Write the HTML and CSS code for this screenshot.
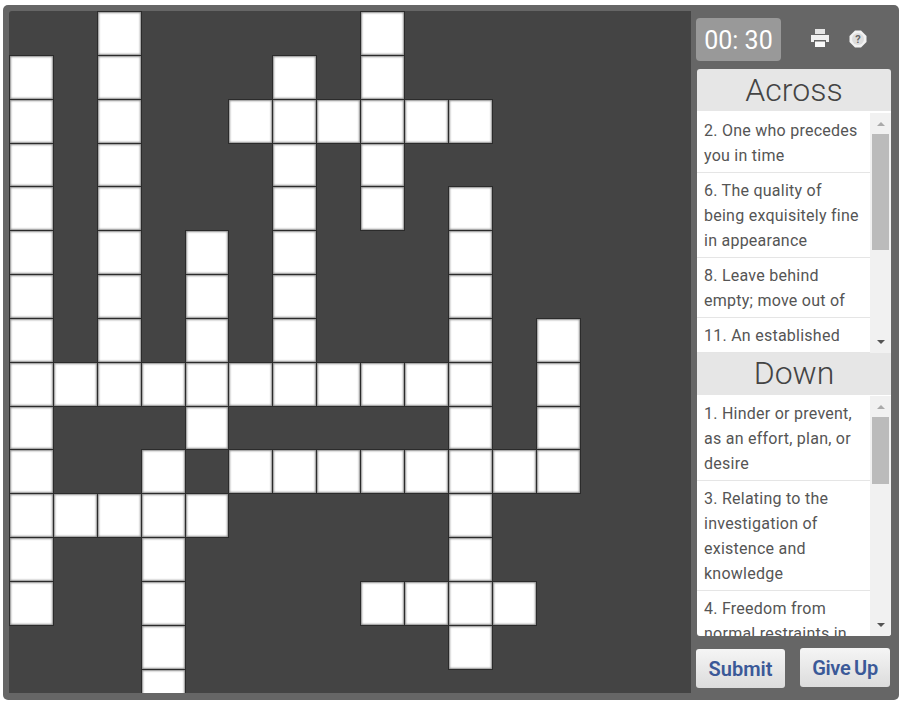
FILE: index.html
```html
<!DOCTYPE html>
<html lang="en">
<head>
  <meta charset="UTF-8">
  <meta name="viewport" content="width=device-width, initial-scale=1.0">
  <title>Crossword</title>
  <link rel="stylesheet" href="styles.css">
</head>
<body>
  <div class="game">
    <div class="board" id="board"></div>
    <div class="side">
      <div class="toolbar">
        <div class="timer">00: 30</div>
        <svg class="icon-print" viewBox="0 0 20 20" width="20" height="20">
          <path d="M5 1h10v5H5z" fill="#e4e4e4"/>
          <path d="M1 7h18v7h-3v-2H4v2H1z" fill="#f0f0f0"/>
          <path d="M5 13.500h10V19H5z" fill="#fafafa"/>
        </svg>
        <svg class="icon-help" viewBox="0 0 20 20" width="20" height="20">
          <path d="M7 1.500h6l5.500 5.500v6L13 18.500H7L1.500 13V7z" fill="#f2f2f2"/>
          <circle cx="10" cy="10" r="6" fill="#ddd"/>
          <text x="10" y="14" text-anchor="middle" class="help-mark">?</text>
        </svg>
      </div>

      <div class="clues clues-across">
        <h2>Across</h2>
        <div class="clue-body">
          <ul>
            <li>2. One who precedes you in time</li>
            <li>6. The quality of being exquisitely fine in appearance</li>
            <li>8. Leave behind empty; move out of</li>
            <li>11. An established</li>
          </ul>
          <div class="scrollbar">
            <span class="arrow up"></span>
            <div class="track"><div class="thumb thumb-across"></div></div>
            <span class="arrow down"></span>
          </div>
        </div>
      </div>

      <div class="clues clues-down">
        <h2>Down</h2>
        <div class="clue-body">
          <ul>
            <li>1. Hinder or prevent, as an effort, plan, or desire</li>
            <li>3. Relating to the investigation of existence and knowledge</li>
            <li>4. Freedom from normal restraints in</li>
          </ul>
          <div class="scrollbar">
            <span class="arrow up"></span>
            <div class="track"><div class="thumb thumb-down"></div></div>
            <span class="arrow down"></span>
          </div>
        </div>
      </div>

      <div class="actions">
        <button class="btn btn-submit">Submit</button>
        <button class="btn btn-giveup">Give Up</button>
      </div>
    </div>
  </div>
  <script>
    const rows = [
      '..#.....#....',
      '#.#...#.#....',
      '#.#..######..',
      '#.#...#.#....',
      '#.#...#.#.#..',
      '#.#.#.#...#..',
      '#.#.#.#...#..',
      '#.#.#.#...#.#',
      '###########.#',
      '#...#.....#.#',
      '#..#.########',
      '#####.....#..',
      '#..#......#..',
      '#..#....####.',
      '...#......#..',
      '...#.........'
    ];

    const board = document.getElementById('board');
    rows.forEach(row => {
      row.split('').forEach(ch => {
        const cell = document.createElement('div');
        cell.className = ch === '#' ? 'cell open' : 'cell';
        board.appendChild(cell);
      });
    });
  </script>
</body>
</html>
```

FILE: styles.css
```css
* {
  box-sizing: border-box;
}

body {
  margin: 0;
  background-color: #fff;
  font-family: Roboto, "Liberation Sans", sans-serif;
}

.game {
  display: flex;
  width: 896px;
  height: 695px;
  margin: 5px 0 0 3px;
  padding: 6px 8px 7px 6px;
  background-color: #666;
  border-radius: 5px;
}

.board {
  display: grid;
  grid-template-columns: repeat(13, 43.9px);
  grid-auto-rows: 43.85px;
  flex: 0 0 682px;
  height: 682px;
  padding-top: 0.500px;
  padding-left: 0.500px;
  overflow: hidden;
  background-color: #444;
  border-radius: 3px 0 0 0;
}

.cell.open {
  margin: -0.500px;
  background-color: #fff;
  border: 1px solid #2b2b2b;
  box-shadow: inset 0 0 2px 1px #8c8c8c;
}

.side {
  flex: 1;
  margin-left: 5px;
}

.toolbar {
  display: flex;
  align-items: center;
  height: 43px;
  margin-top: 7px;
}

.timer {
  width: 85px;
  height: 43px;
  background-color: #999;
  border-radius: 4px;
  color: #fff;
  font-size: 25px;
  line-height: 45px;
  text-align: center;
}

.icon-print {
  margin: 0 0 3px 29px;
}

.icon-help {
  margin: 0 0 2px 18px;
}

.help-mark {
  fill: #666;
  font-family: Roboto, sans-serif;
  font-size: 11px;
  font-weight: bold;
}

.clues {
  width: 194px;
  margin-left: 1px;
}

.clues-across {
  margin-top: 8px;
  border-radius: 3px 3px 0 0;
  overflow: hidden;
}

.clues h2 {
  height: 42px;
  margin: 0;
  background-color: #e6e6e6;
  color: #444;
  font-size: 32px;
  font-weight: 300;
  line-height: 43px;
  text-align: center;
}

.clues-down h2 {
  line-height: 41px;
}

.clue-body {
  display: flex;
  height: 242px;
  padding-top: 2px;
  background-color: #fff;
  overflow: hidden;
}

.clues-down .clue-body {
  height: 241px;
  padding-top: 1px;
  border-radius: 0 0 3px 3px;
}

.clue-body ul {
  flex: 1;
  margin: 0;
  padding: 0;
  list-style: none;
}

.clue-body li {
  padding: 5px 7px 4px;
  border-bottom: 1px solid #e5e5e5;
  color: #555;
  font-size: 16px;
  letter-spacing: 0.250px;
  line-height: 25px;
}

.scrollbar {
  display: flex;
  flex-direction: column;
  flex: 0 0 21px;
  padding: 0 2px;
  background-color: #f1f1f1;
}

.arrow {
  flex: 0 0 21px;
  position: relative;
}

.arrow::after {
  content: "";
  position: absolute;
  left: 4.500px;
  border-left: 4px solid transparent;
  border-right: 4px solid transparent;
}

.arrow.up::after {
  top: 9px;
  border-bottom: 4px solid #aaa;
}

.arrow.down::after {
  bottom: 9px;
  border-top: 4px solid #555;
}

.track {
  flex: 1;
}

.thumb {
  background-color: #bbb;
}

.thumb-across {
  height: 116px;
}

.thumb-down {
  height: 67px;
}

.actions {
  display: flex;
  justify-content: space-between;
  width: 194px;
  margin-top: 13px;
}

.btn {
  height: 39px;
  padding: 0;
  border: none;
  border-radius: 3px;
  background: linear-gradient(#f5f5f5, #dcdcdc);
  color: #3b5998;
  font-family: inherit;
  font-size: 20px;
  font-weight: 600;
}

.btn-submit {
  width: 89px;
}

.btn-giveup {
  width: 90px;
  margin-top: -1px;
  letter-spacing: -0.300px;
  word-spacing: -1px;
}
```
